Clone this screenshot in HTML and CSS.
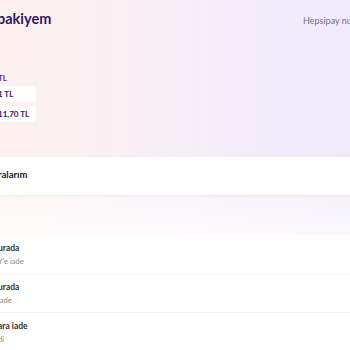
FILE: index.html
```html
<!DOCTYPE html>
<html lang="tr">
<head>
    <meta charset="UTF-8">
    <meta name="viewport" content="width=device-width, initial-scale=1.0">
    <title>Hepsipay bakiyem</title>
    <link rel="stylesheet" href="styles.css">
</head>
<body>
    <div class="page">
        <section class="hero">
            <div class="hero-top">
                <h1 class="hero-title">bakiyem</h1>
                <span class="hero-link">Hepsipay numaranız</span>
            </div>
            <div class="balance">
                <span class="balance-label">TL</span>
                <span class="balance-pill">1 TL</span>
                <span class="balance-pill">11,70 TL</span>
            </div>
        </section>

        <div class="tab-card">
            <span class="tab-title">ralarım</span>
        </div>

        <div class="gap-band"></div>

        <ul class="tx-list">
            <li class="tx-row">
                <span class="tx-title">urada</span>
                <span class="tx-sub">Y'e iade</span>
            </li>
            <li class="tx-row">
                <span class="tx-title">urada</span>
                <span class="tx-sub">iade</span>
            </li>
            <li class="tx-row">
                <span class="tx-title">ara iade</span>
                <span class="tx-sub">di</span>
            </li>
        </ul>
    </div>
</body>
</html>
```

FILE: styles.css
```css
* {
    margin: 0;
    padding: 0;
    box-sizing: border-box;
}

body {
    font-family: Lato, "Noto Sans", Arial, sans-serif;
    background: #fff;
    overflow: hidden;
}

.page {
    width: 350px;
    height: 350px;
    overflow: hidden;
    background: linear-gradient(90deg, #fdf1ef 0%, #f8eff6 45%, #efe9fc 100%);
}

.hero {
    height: 157px;
    padding-top: 9px;
}

.hero-top {
    display: flex;
    align-items: flex-start;
    height: 20px;
    white-space: nowrap;
}

.hero-title {
    font-size: 14.5px;
    font-weight: 700;
    color: #32195f;
    margin-left: -3px;
    line-height: 20px;
}

.hero-link {
    margin-left: auto;
    width: 47px;
    font-size: 9px;
    color: #77777f;
    margin-top: 6px;
    line-height: 11px;
}

.balance {
    display: flex;
    flex-direction: column;
    align-items: flex-start;
    margin-top: 43px;
    gap: 4px;
}

.balance-label {
    font-size: 8px;
    font-weight: 700;
    color: #5a2ea0;
    margin-left: -2px;
    margin-bottom: -2px;
    line-height: 12px;
}

.balance-pill {
    width: 44px;
    height: 16px;
    margin-left: -8px;
    padding-left: 6px;
    background: #fff;
    border-radius: 4px;
    font-size: 8px;
    font-weight: 700;
    color: #32195f;
    line-height: 16px;
}

.tab-card {
    height: 38px;
    background: #fff;
    display: flex;
    align-items: center;
    padding-bottom: 4px;
    box-shadow: 0 1px 2px rgba(0, 0, 0, 0.12);
}

.tab-title {
    font-size: 9.5px;
    font-weight: 700;
    color: #222;
    margin-left: -2px;
}

.gap-band {
    height: 40px;
    background: linear-gradient(180deg, rgba(255, 255, 255, 0.4), rgba(255, 255, 255, 0.75));
}

.tx-list {
    list-style: none;
    background: #fff;
    height: 115px;
}

.tx-row {
    height: 39px;
    display: flex;
    flex-direction: column;
    align-items: flex-start;
    padding-top: 8px;
    gap: 3px;
    border-bottom: 1px solid #f2f2f2;
    white-space: nowrap;
}

.tx-title {
    font-size: 8.5px;
    font-weight: 700;
    color: #333;
    line-height: 11px;
    margin-left: -2px;
}

.tx-sub {
    font-size: 7.5px;
    color: #8a8a8a;
    line-height: 10px;
    margin-left: -2px;
}
```
